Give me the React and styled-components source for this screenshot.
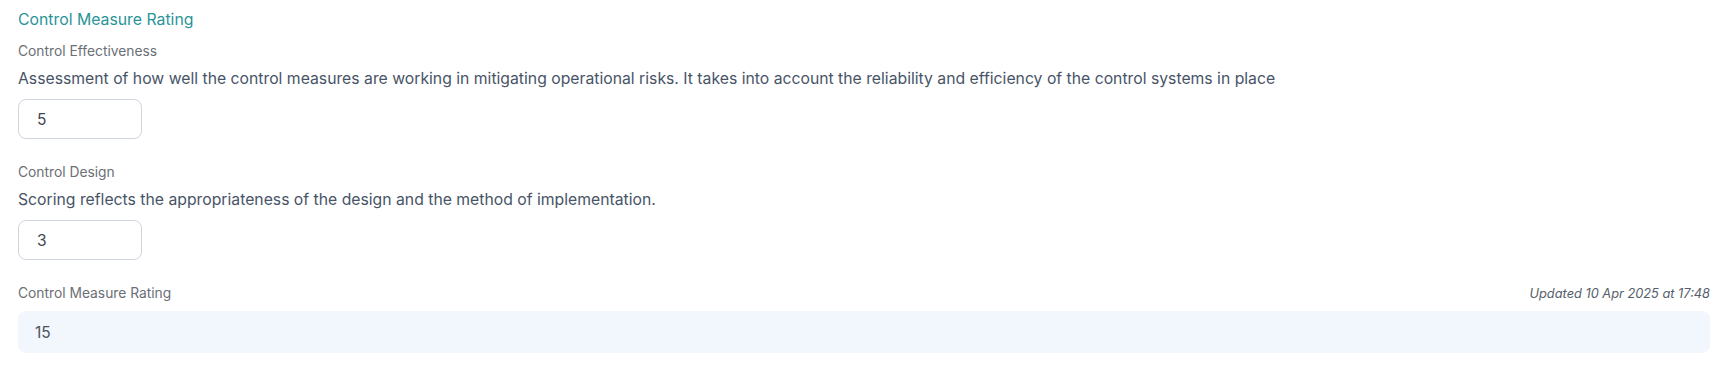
import React from 'react';
import styled, { createGlobalStyle } from 'styled-components';

const GlobalStyle = createGlobalStyle`
  body {
    margin: 0;
    background: #ffffff;
    font-family: Inter, "Noto Sans", sans-serif;
  }
`;

const Pagina = styled.div`
  padding: 8px 18px 16px 18px;
  display: flex;
  flex-direction: column;
`;

const Titulo = styled.h2`
  margin: 0 0 9px 0;
  font-size: 15.8px;
  line-height: 24px;
  font-weight: 400;
  color: #2a9499;
`;

const Campo = styled.div`
  display: flex;
  flex-direction: column;
  margin-bottom: ${(props) => props.espaco ?? 23}px;
`;

const CabecalhoCampo = styled.div`
  display: flex;
  justify-content: space-between;
  align-items: baseline;
`;

const Rotulo = styled.label`
  font-size: 13.8px;
  line-height: 20px;
  color: #6b6f76;
`;

const Atualizado = styled.span`
  font-size: 12.8px;
  line-height: 20px;
  font-style: italic;
  color: #555e6b;
`;

const Descricao = styled.p`
  margin: 6px 0 8px 0;
  font-size: 15.75px;
  line-height: 24px;
  color: #475467;
`;

const CaixaNota = styled.div`
  box-sizing: border-box;
  width: 124px;
  height: 40px;
  display: flex;
  align-items: center;
  padding: 0 18px;
  border: 1px solid #cfd5de;
  border-radius: 8px;
  font-size: 15.5px;
  color: #3f4754;
`;

const CaixaResultado = styled.div`
  box-sizing: border-box;
  margin-top: 7px;
  height: 42px;
  display: flex;
  align-items: center;
  padding: 0 17px;
  background: #f2f6fd;
  border-radius: 8px;
  font-size: 15.5px;
  color: #4b5361;
`;

const campos = [
  {
    rotulo: 'Control Effectiveness',
    descricao:
      'Assessment of how well the control measures are working in mitigating operational risks. It takes into account the reliability and efficiency of the control systems in place',
    valor: 5,
  },
  {
    rotulo: 'Control Design',
    descricao: 'Scoring reflects the appropriateness of the design and the method of implementation.',
    valor: 3,
  },
];

export default function App() {
  return (
    <>
      <GlobalStyle />
      <Pagina>
        <Titulo>Control Measure Rating</Titulo>
        {campos.map((campo) => (
          <Campo key={campo.rotulo}>
            <Rotulo>{campo.rotulo}</Rotulo>
            <Descricao>{campo.descricao}</Descricao>
            <CaixaNota>{campo.valor}</CaixaNota>
          </Campo>
        ))}
        <Campo espaco={0}>
          <CabecalhoCampo>
            <Rotulo>Control Measure Rating</Rotulo>
            <Atualizado>Updated 10 Apr 2025 at 17:48</Atualizado>
          </CabecalhoCampo>
          <CaixaResultado>15</CaixaResultado>
        </Campo>
      </Pagina>
    </>
  );
}
